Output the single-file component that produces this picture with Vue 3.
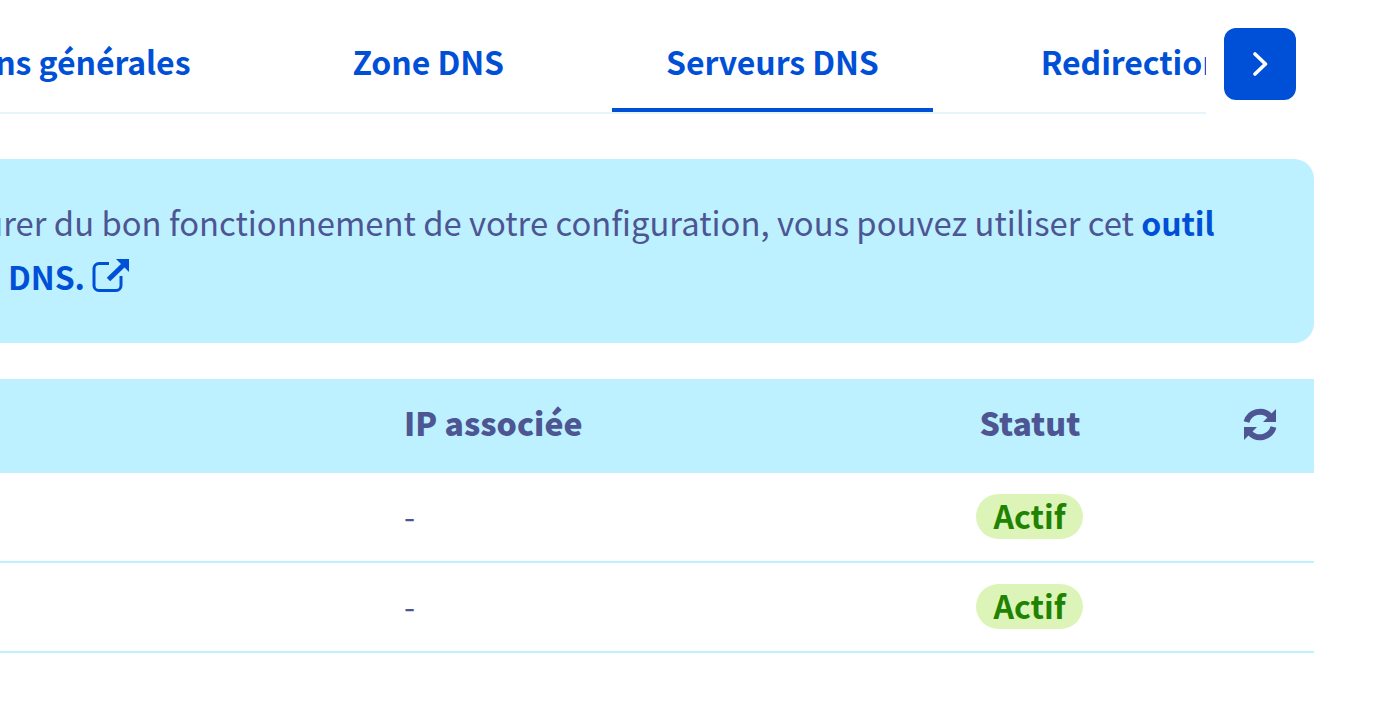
<template>
  <main class="page">
    <nav class="tabs-row">
      <div class="tabs">
        <a v-for="t in tabs" :key="t" :class="['tab', { active: t === 'Serveurs DNS' }]">{{ t }}</a>
      </div>
      <button class="next" type="button" aria-label="Suivant">
        <svg width="16" height="24" viewBox="0 0 16 24">
          <path d="M3 2l10.5 10L3 22" fill="none" stroke="#fff" stroke-width="3.6" stroke-linecap="round" stroke-linejoin="round" />
        </svg>
      </button>
    </nav>

    <div class="alert">
      Pour vous assurer du bon fonctionnement de votre configuration, vous pouvez utiliser cet
      <a class="link">outil de vérification DNS.<svg class="ext" width="38" height="34" viewBox="0 0 38 34">
          <path d="M17 5.5H7a5 5 0 0 0-5 5v17a5 5 0 0 0 5 5h17a5 5 0 0 0 5-5V18" fill="none" stroke="#0050d7" stroke-width="3" />
          <path d="M16.5 21.5L31 7.5" fill="none" stroke="#0050d7" stroke-width="5" />
          <path d="M24 1h13v13z" fill="#0050d7" />
        </svg></a>
    </div>

    <div class="table">
      <div class="row head">
        <span class="name">Serveur DNS</span>
        <span>IP associée</span>
        <span class="status">Statut</span>
        <span class="action">
          <svg class="refresh" width="34" height="33" viewBox="0 0 34 33">
            <path d="M3.5 14A14 14 0 0 1 27 8" fill="none" stroke="#4d5693" stroke-width="6" />
            <path d="M33 1v13H20z" fill="#4d5693" />
            <path d="M30.5 19A14 14 0 0 1 7 25" fill="none" stroke="#4d5693" stroke-width="6" />
            <path d="M1 32V19h13z" fill="#4d5693" />
          </svg>
        </span>
      </div>
      <div v-for="r in rows" :key="r.name" class="row">
        <span class="name">{{ r.name }}</span>
        <span>{{ r.ip }}</span>
        <span class="status"><span class="badge">{{ r.status }}</span></span>
        <span class="action"></span>
      </div>
    </div>
  </main>
</template>

<script setup>
const tabs = ['Informations générales', 'Zone DNS', 'Serveurs DNS', 'Redirections', 'E-mails']

const rows = [
  { name: 'dns.ovh.net', ip: '-', status: 'Actif' },
  { name: 'ns.ovh.net', ip: '-', status: 'Actif' },
]
</script>

<style>
html, body { margin: 0; overflow: hidden; background: #fff; }
</style>

<style scoped>
.page {
  width: 1614px;
  margin-left: -300px;
  font-family: "Noto Sans CJK SC", "Noto Sans", sans-serif;
  font-size: 32px;
  color: #4d5693;
}
.tabs-row {
  display: flex;
  align-items: flex-start;
  gap: 18px;
  padding-right: 18px;
}
.tabs {
  width: 1506px;
  height: 114px;
  box-sizing: border-box;
  padding-left: 73px;
  display: flex;
  gap: 54px;
  overflow: hidden;
  border-bottom: 2px solid #e6f5fc;
}
.tab {
  flex-shrink: 0;
  padding: 0 54px;
  height: 112px;
  box-sizing: border-box;
  line-height: 122px;
  font-weight: 700;
  letter-spacing: -0.08px;
  color: #0050d7;
  white-space: nowrap;
}
.tab.active { border-bottom: 4px solid #0050d7; }
.next {
  width: 72px;
  height: 72px;
  margin-top: 28px;
  border: 0;
  border-radius: 12px;
  background: #0050d7;
  display: flex;
  align-items: center;
  justify-content: center;
  padding: 0;
}
.alert {
  margin-top: 45px;
  padding: 36px 60px 0 75px;
  height: 184px;
  box-sizing: border-box;
  font-size: 32.8px;
  line-height: 53px;
  background: #bef1ff;
  border-radius: 20px;
}
.link { font-size: 32px; font-weight: 700; letter-spacing: -0.08px; color: #0050d7; }
.ext { margin-left: 7px; vertical-align: -2px; }
.table { margin-top: 36px; }
.row {
  display: grid;
  grid-template-columns: 704px 521px 210px 1fr;
  align-items: center;
  height: 90px;
  padding-bottom: 4px;
  box-sizing: border-box;
  border-bottom: 2px solid #bef1ff;
}
.row.head {
  height: 94px;
  padding-bottom: 8px;
  background: #bef1ff;
  font-weight: 900;
  border-bottom: 0;
}
.name { padding-left: 24px; }
.status { text-align: center; }
.action {
  display: flex;
  justify-content: flex-end;
  padding-right: 37px;
}
.refresh { margin-top: 4px; }
.badge {
  display: inline-block;
  padding: 0 17px;
  height: 45px;
  line-height: 43px;
  margin: 2px 0 0 -1px;
  border-radius: 23px;
  background: #ddf4b8;
  color: #1f8300;
  font-weight: 700;
}
</style>
